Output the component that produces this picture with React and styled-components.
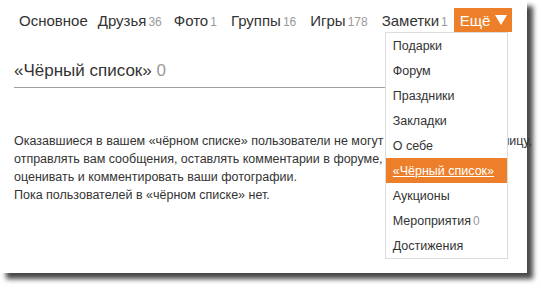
import React from "react";
import styled, { createGlobalStyle } from "styled-components";

const Global = createGlobalStyle`
  html, body { margin: 0; padding: 0; background: #fff; }
  body { font-family: Arial, "Liberation Sans", sans-serif; width: 541px; height: 290px; overflow: hidden; }
`;

const Card = styled.div`
  position: relative;
  width: 527px;
  height: 273px;
  background: #fff;
  box-shadow: 6px 6px 5px rgba(0, 0, 0, 0.72);
  box-sizing: border-box;
  padding: 8px 0 0 14px;
`;

const Nav = styled.div`
  display: flex;
  align-items: center;
  height: 24px;
  padding-left: 5px;
  gap: 12px;
`;

const NavItem = styled.span`
  font-size: 15px;
  color: #333;
  white-space: nowrap;
  margin-right: ${(p) => p.$extra || 0}px;
`;

const Count = styled.span`
  font-size: 12px;
  color: #999;
  margin-left: 2px;
`;

const MoreWrap = styled.div`
  position: relative;
  margin-left: -6px;
`;

const MoreButton = styled.div`
  display: flex;
  align-items: center;
  gap: 5px;
  height: 24px;
  padding: 0 5px 0 6px;
  background: #ed7f2b;
  color: #fff;
  font-size: 15px;
  box-sizing: border-box;
`;

const Menu = styled.div`
  position: absolute;
  top: 24px;
  left: -69px;
  width: 123px;
  background: #fff;
  border: 1px solid #dcdcdc;
  box-sizing: border-box;
  z-index: 2;
`;

const MenuItem = styled.div`
  height: 25px;
  display: flex;
  align-items: center;
  padding-left: 7px;
  font-size: 12.5px;
  color: ${(p) => (p.$active ? "#fff" : "#333")};
  background: ${(p) => (p.$active ? "#ed7f2b" : "transparent")};
  text-decoration: ${(p) => (p.$active ? "underline" : "none")};
  white-space: nowrap;
`;

const Title = styled.h2`
  margin: 29px 0 0 0;
  font-weight: normal;
  font-size: 17px;
  color: #333;
  padding-bottom: 6px;
  border-bottom: 1px solid #a0a0a0;
  width: 372px;
`;

const TitleCount = styled.span`
  color: #999;
`;

const Text = styled.p`
  margin: 44px 0 0 0;
  font-size: 12.5px;
  line-height: 18px;
  color: #333;
  white-space: nowrap;
`;

const items = [
  "Подарки",
  "Форум",
  "Праздники",
  "Закладки",
  "О себе",
  "«Чёрный список»",
  "Аукционы",
  "Мероприятия",
  "Достижения",
];

export default function App() {
  return (
    <>
      <Global />
      <Card>
        <Nav>
          <NavItem $extra={-2}>Основное</NavItem>
          <NavItem>Друзья<Count>36</Count></NavItem>
          <NavItem $extra={2}>Фото<Count>1</Count></NavItem>
          <NavItem $extra={2}>Группы<Count>16</Count></NavItem>
          <NavItem $extra={2}>Игры<Count>178</Count></NavItem>
          <NavItem>Заметки<Count>1</Count></NavItem>
          <MoreWrap>
            <MoreButton>
              Ещё
              <svg width="12" height="10" viewBox="0 0 12 10">
                <path d="M0 0 H12 L6 10 Z" fill="#fff" />
              </svg>
            </MoreButton>
            <Menu>
              {items.map((it) => (
                <MenuItem key={it} $active={it === "«Чёрный список»"}>
                  {it}
                  {it === "Мероприятия" && <Count>0</Count>}
                </MenuItem>
              ))}
            </Menu>
          </MoreWrap>
        </Nav>
        <Title>
          «Чёрный список» <TitleCount>0</TitleCount>
        </Title>
        <Text>
          Оказавшиеся в вашем «чёрном списке» пользователи не могут смотреть вашу страницу,
          <br />
          отправлять вам сообщения, оставлять комментарии в форуме, просматривать,
          <br />
          оценивать и комментировать ваши фотографии.
          <br />
          Пока пользователей в «чёрном списке» нет.
        </Text>
      </Card>
    </>
  );
}
